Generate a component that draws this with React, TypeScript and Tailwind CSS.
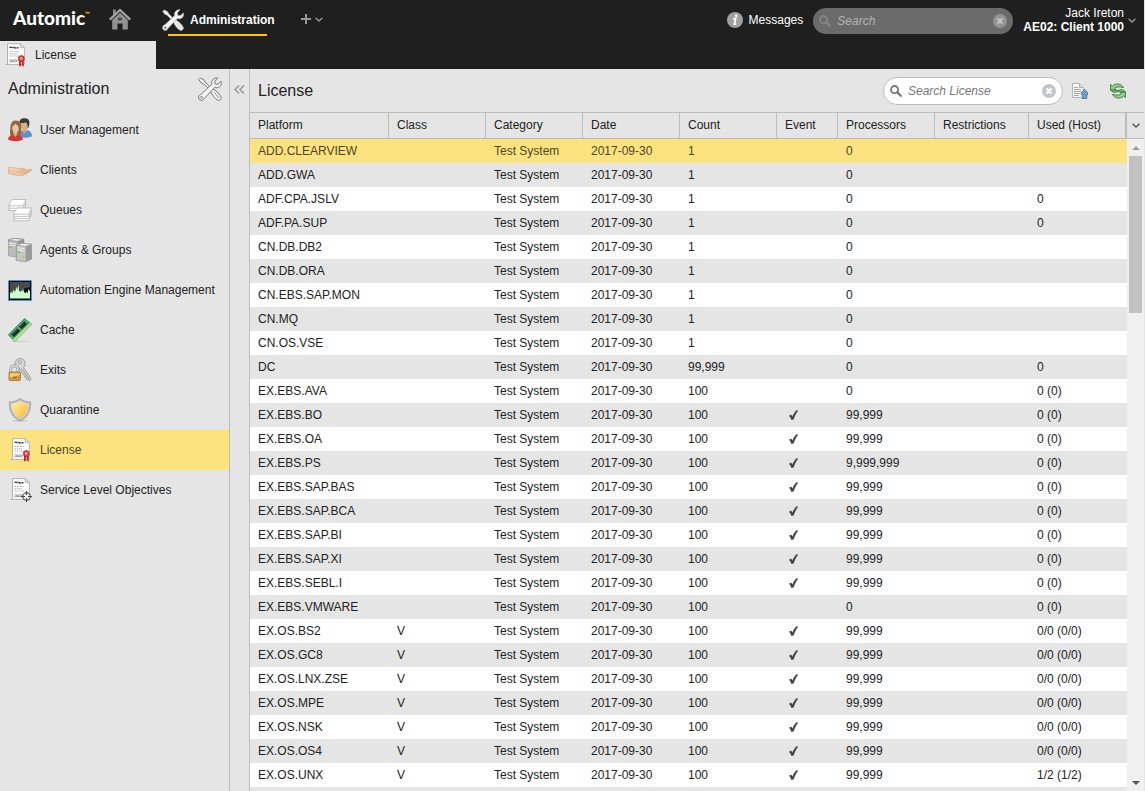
import { useState } from 'react';
import type { ReactNode } from 'react';

type IconProps = { className?: string };

const ToolsIcon = ({ className = '', dark = false }: IconProps & { dark?: boolean }) => {
  const line = dark ? '#6a6a6a' : '#b0b0b0';
  return (
    <svg viewBox="0 0 24 24" className={className} aria-hidden="true">
      <g stroke={line} strokeWidth=".9" strokeLinejoin="round" fill="#f4f4f4">
        <path d="M.8 2.6 2.4 1 6.4 3.2 7 5 12 10 10.4 11.6 5.4 6.6 3.4 6Z" />
        <path d="M12.8 14.4C13.2 13.2 14.4 12.2 15.8 12.4 18.6 14 22 17.6 23.2 20.2 23.6 22.2 21.8 23.8 19.8 23.2 17 21.8 13.8 17.8 12.8 14.4Z" />
        <path d="M19.6.9 16.8 4.2 17.2 7 20 7.3 23.2 4.4C24.1 7.2 22.6 10 19.8 10.6 18.6 10.9 17.6 10.7 16.8 10.4L6.8 20.8C6 22.6 4.6 23.5 3.2 23.3 1.4 23.1.4 21.6.7 19.9.9 18.5 1.9 17.6 3.2 17.2L13.7 7.3C13 3.6 15.8.3 19.6.9Z" />
      </g>
      <circle cx="3.6" cy="20.4" r="1" fill={dark ? '#e5e5e5' : '#1f1f1f'} stroke={line} strokeWidth=".7" />
      <path d="M16.4 15.4 20.8 20.8" stroke={line} strokeWidth=".8" />
    </svg>
  );
};

const HomeIcon = ({ className = '' }: IconProps) => (
  <svg viewBox="0 0 22 22" className={className} aria-hidden="true">
    <path d="M4 1.5H6.8V5L4 7.6Z" fill="#8a8a8a" />
    <path d="M.8 11.6 11 2 21.2 11.6" fill="none" stroke="#a6a6a6" strokeWidth="2.2" />
    <path d="M11 4.8 18.8 12V21.5H13.6V15.4H8.4V21.5H3.2V12Z" fill="#929292" />
    <rect x="9" y="9.6" width="4" height="2.8" fill="#4a4a4a" />
  </svg>
);

const ChevronIcon = ({ className = '' }: IconProps) => (
  <svg viewBox="0 0 8 5" className={className} aria-hidden="true">
    <path d="M.6.7 4 4 7.4.7" fill="none" stroke="currentColor" strokeWidth="1.3" />
  </svg>
);

const MagnifierIcon = ({ className = '' }: IconProps) => (
  <svg viewBox="0 0 12 12" className={className} aria-hidden="true">
    <circle cx="4.6" cy="4.6" r="3.6" fill="none" stroke="currentColor" strokeWidth="1.8" />
    <path d="M7.4 7.4 10.8 10.8" stroke="currentColor" strokeWidth="2.2" strokeLinecap="round" />
  </svg>
);

const ClearIcon = ({ cross, className = '' }: IconProps & { cross: string }) => (
  <svg viewBox="0 0 14 14" className={className} aria-hidden="true">
    <circle cx="7" cy="7" r="7" fill="currentColor" />
    <path d="M4.5 4.5 9.5 9.5M9.5 4.5 4.5 9.5" stroke={cross} strokeWidth="2.2" />
  </svg>
);

const InfoIcon = ({ className = '' }: IconProps) => (
  <svg viewBox="0 0 16 16" className={className} aria-hidden="true">
    <circle cx="8" cy="8" r="8" fill="#a0a0a0" />
    <circle cx="9.2" cy="3.8" r="1.4" fill="#fff" />
    <path d="M6 6.6H8.6L7.4 12H9.2" fill="none" stroke="#fff" strokeWidth="1.8" />
  </svg>
);

const CheckIcon = ({ className = '' }: IconProps) => (
  <svg viewBox="0 0 9 10" className={className} aria-hidden="true">
    <path d="M0 5.8 2 4.6 3.4 6.6C4.6 3.8 6 1.6 7.8 0L9 .8C7.2 3.2 5.8 6.2 4.6 9.4L2.4 9.9C1.8 8.2 1.1 7 0 5.8Z" fill="#444" />
  </svg>
);

const ExportIcon = ({ className = '' }: IconProps) => (
  <svg viewBox="0 0 16 16" className={className} aria-hidden="true">
    <path d="M.5.5H7.5L11.5 4.5V14.5H.5Z" fill="#f7f7f7" stroke="#b3b3b3" />
    <path d="M7.5.5V4.5H11.5" fill="#ddd" stroke="#b3b3b3" />
    <path d="M2 4.5H6M2 6.5H9M2 8.5H9M2 10.5H8M2 12.5H7" stroke="#a8a8a8" />
    <path d="M12.5 6.3 15.8 9.8V11.5H14.8V15.5H10.2V11.5H9.2V9.8Z" fill="#6d9fd3" stroke="#3f70a8" strokeWidth=".8" />
  </svg>
);

const RefreshIcon = ({ className = '' }: IconProps) => (
  <svg viewBox="0 0 16 16" className={className} aria-hidden="true">
    <g fill="#9bd096" stroke="#3a8440" strokeWidth="1" strokeLinejoin="round">
      <path d="M.6 1.4V6.8H6.2L4.6 5.2C6.6 3.8 9.6 3.4 13.6 4.6 11.4.8 6-.6 2.4 3.1Z" />
      <path d="M.6 6.8C1.4 8.8 3.6 9.6 6.6 9.2L8.2 7.4C5.4 8 2.6 8 .6 6.8Z" />
      <path d="M15.4 14.6V9.2H9.8L11.4 10.8C9.4 12.2 6.4 12.6 2.4 11.4 4.6 15.2 10 16.6 13.6 12.9Z" />
      <path d="M15.4 9.2C14.6 7.2 12.4 6.4 9.4 6.8L7.8 8.6C10.6 8 13.4 8 15.4 9.2Z" />
    </g>
  </svg>
);

const DocumentPage = () => (
  <>
    <path d="M2.5 21.5H20" stroke="#b0b0b0" />
    <path d="M4.5.6H17.2L21.4 4.6V21.4H4.5Z" fill="#fdfdfd" stroke="#b4b4b4" strokeWidth="1" />
    <path d="M17.2.6V4.6H21.4Z" fill="#ddd" stroke="#b4b4b4" strokeWidth=".8" />
    <path d="M6.5 4.4H9M9.5 4.8 10.6 4.2M11 4.7H12.4M13 4.4V5.6M14 4.8H15.4" stroke="#333" strokeWidth="1.4" fill="none" />
    <path d="M6.5 8.5H11M12 8.5H16M6.5 10.8H14M6.5 13H10M11 13H16" stroke="#b0b0b0" strokeWidth=".9" strokeDasharray="1.6 .5" />
    <path d="M6.5 17.6 8 16.4 8.6 17.8 10.2 16.6 10.6 17.8 12.4 16.2 13.2 17.6 15 17.4M6.5 18.6H14" stroke="#777" strokeWidth=".7" fill="none" />
  </>
);

const LicenseIcon = () => (
  <svg viewBox="0 0 24 24" className="size-6 shrink-0" aria-hidden="true">
    <DocumentPage />
    <path d="M16 17.5V23.8L17.2 22.6 17.9 23.4V17.5ZM18.7 17.5V23.4L19.6 22.6 20.8 23.8V17.5Z" fill="#c02525" />
    <circle cx="18.3" cy="15.6" r="3" fill="#d94444" stroke="#b02020" strokeWidth=".7" />
    <circle cx="18.3" cy="15.4" r="1.4" fill="#f0a0a0" />
  </svg>
);

const ObjectivesIcon = () => (
  <svg viewBox="0 0 24 24" className="size-6 shrink-0" aria-hidden="true">
    <DocumentPage />
    <circle cx="18.5" cy="18.5" r="3.8" fill="#f2f2f2" stroke="#444" strokeWidth="1.1" />
    <path d="M18.5 13V17M18.5 20V24M13 18.5H17M20 18.5H24" stroke="#444" strokeWidth="1.1" />
  </svg>
);

const UsersIcon = () => (
  <svg viewBox="0 0 24 24" className="size-6 shrink-0" aria-hidden="true">
    <path d="M11 19C11 14.4 13.4 12 17.4 11.8 21.6 12 24 14.6 24 18.2 20.4 20 14.6 20 11 19Z" fill="#5b93c9" />
    <path d="M14.6 10.4H18.6L18.8 13.2 16.4 15.4 14 13Z" fill="#d9a67c" />
    <ellipse cx="16.2" cy="7" rx="4.2" ry="5" fill="#d9b08a" />
    <path d="M11.4 6.4C10.6 1.4 14 0 17 .3 20.8.4 22.2 3.4 21.2 7.2 20.8 9 20 10.2 19.4 10.6 20 7.6 19.4 5.6 18 4.6 15.8 5.4 13 4.4 11.4 6.4Z" fill="#3b3b3b" />
    <path d="M2.4 9.6C2.4 5 4.6 2.3 8 2.5 11.8 2.6 13.4 5.6 13.2 9.6 13.1 12.8 13.8 15.4 12.4 17.6 9.4 19.4 5 19.2 2.4 17.4 1.4 14.8 2.4 12.2 2.4 9.6Z" fill="#94663c" />
    <path d="M0 21.6C.2 18.8 2.6 17.2 5.4 16.6H9.8C12.6 17.2 14.8 19 15 21.6 11 23.8 4 23.8 0 21.6Z" fill="#cf3636" />
    <path d="M5.8 13.2H9.2V16.4L7.4 19 5.4 16.4Z" fill="#dcae86" />
    <path d="M4.2 9.6C4.4 7.8 6.4 7.6 7.6 5.6 8.6 7.6 10.6 7.6 10.8 9.8 10.8 13 9.2 15.2 7.6 15.2 5.8 15.2 4.2 12.8 4.2 9.6Z" fill="#e6c8a8" />
  </svg>
);

const HandIcon = () => (
  <svg viewBox="0 0 24 24" className="size-6 shrink-0" aria-hidden="true">
    <path d="M0 9.4C4 9.2 7 10 9.6 10.4 13 9.8 16 10.2 17.4 11.4 20 11.6 23 11 23.8 11.6 24 12.6 22.4 13.2 21 14 18.6 15.6 15.4 18 11.4 17.8 7 17.6 4 16 0 15.6Z" fill="#ecc5a4" stroke="#cf9c78" strokeWidth=".5" />
    <path d="M9 13.6C12 14.4 15.4 14.2 22.6 12.6M12 12H17.4M13.6 16C16.4 15.6 18.4 15 20.6 13.8" fill="none" stroke="#cf9a74" strokeWidth=".6" />
    <path d="M1 10.6C4 10.4 6 11.2 9 11.6" fill="none" stroke="#f8dcc4" strokeWidth="1" />
  </svg>
);

const QueuesIcon = () => (
  <svg viewBox="0 0 24 24" className="size-6 shrink-0" aria-hidden="true">
    <g fill="#fff" stroke="#b2b2b2" strokeWidth=".8" strokeLinejoin="round">
      <path d="M.5 12.5 3.6 6.4H18L14.8 12.5Z" />
      <path d="M.5 10.2 4 4H18L14.8 10.2Z" />
      <path d="M.5 7.8 4 1.5H18L14.8 7.8Z" />
      <path d="M5.5 22.8 8.6 16.6H23.5L20.5 22.8Z" />
      <path d="M5.5 20.6 8.6 14.4H23.5L20.5 20.6Z" />
      <path d="M5.5 18.4 8.6 12.2H23.5L20.5 18.4Z" />
      <path d="M5.5 16.2 8.6 10H23.5L20.5 16.2Z" />
    </g>
  </svg>
);

const ServersIcon = () => (
  <svg viewBox="0 0 24 24" className="size-6 shrink-0" aria-hidden="true">
    <path d="M.3 2 6 .2 16 1.4V17L8 19 .3 17.6Z" fill="#bcbcbc" stroke="#8a8a8a" strokeWidth=".6" />
    <path d="M.3 2 6 .2 16 1.4 9.6 3.6Z" fill="#e2e2e2" stroke="#777" strokeWidth=".5" />
    <path d="M9.6 3.6 16 1.4V6H9.6Z" fill="#979797" />
    <path d="M1.2 5 8.4 6M1.2 7.2 8 8" stroke="#eee" strokeWidth=".9" />
    <path d="M1.2 9 3.6 9.3" stroke="#4bd34b" strokeWidth="1.3" />
    <path d="M8.3 7 14 5.2 23.7 6.4V21L17.6 23.7 8.3 22.4Z" fill="#c6c6c6" stroke="#7d7d7d" strokeWidth=".6" />
    <path d="M8.3 7 14 5.2 23.7 6.4 17.6 8.4Z" fill="#ececec" stroke="#888" strokeWidth=".5" />
    <path d="M17.6 8.4 23.7 6.4V21L17.6 23.7Z" fill="#9a9a9a" />
    <path d="M9.4 9.6 16.6 10.8M9.4 11.8 16.6 13" stroke="#f2f2f2" strokeWidth="1" />
    <path d="M9.4 14.2 12 14.6" stroke="#4bd34b" strokeWidth="1.3" />
    <circle cx="15.4" cy="19" r=".8" fill="#e0973a" />
  </svg>
);

const MonitorIcon = () => (
  <svg viewBox="0 0 24 24" className="size-6 shrink-0" aria-hidden="true">
    <rect x=".5" y="2.5" width="23" height="20" rx=".5" fill="#0a0a0a" stroke="#4f95cf" />
    <path d="M2 4H22V9L2 15Z" fill="#4a4a4a" />
    <path d="M2 20.5V15L3.4 14 4.4 15 5.4 11.6 6.2 13.6 7.4 13 8.4 8.4 9.2 12 10.4 6.8 11.2 12.4 12.2 14 13.2 11.6 14 13.6 15 10 16 14 17.4 15.2 18.4 13.4 19.6 15.4 20.4 10.6 21.2 13 22 12.4V20.5Z" fill="#cdfccd" />
  </svg>
);

const MemoryIcon = () => (
  <svg viewBox="0 0 24 24" className="size-6 shrink-0" aria-hidden="true">
    <path d="M4 23.4H20" stroke="#cfcfcf" strokeWidth="1.2" />
    <path d="M.2 16.8 16.4.6 23.8 6.2 7 23.4Z" fill="#45ad68" stroke="#2c8a4c" strokeWidth=".7" />
    <path d="M7 23.4 23.8 6.2 22 4.8 5 21.6Z" fill="#9be098" />
    <path d="M6.4 22 22.6 5.8" stroke="#e8dc7a" strokeWidth="1.3" strokeDasharray="1.4 .6" />
    <path d="M3.2 16.4 9.4 10.4 12.2 12.8 6 19Z" fill="#262626" />
    <path d="M11 8.8 16.2 3.6 19 6 13.8 11.2Z" fill="#262626" />
    <path d="M4.6 16.6 9.4 12M12.6 8.8 16.2 5.2" stroke="#666" strokeWidth=".8" />
  </svg>
);

const KeysIcon = () => (
  <svg viewBox="0 0 24 24" className="size-6 shrink-0" aria-hidden="true">
    <path d="M11.8.6C15.4.2 17.6 3.2 17 6.6 16.8 8 16.2 9 15.6 9.6L23.2 20.6 21.4 23 19.6 21.4 18.6 21.6 18.2 19.4 16.8 19.2 16.6 17.2 15 16.6 12 11.2C8.4 10.8 6.6 8.2 6.8 5.4 7.2 2.6 9.4.8 11.8.6Z" fill="#d5d5d5" stroke="#909090" strokeWidth=".8" />
    <circle cx="11.6" cy="4.2" r="1.5" fill="#e5e5e5" stroke="#888" strokeWidth=".7" />
    <path d="M13.6 10.6 21.6 21.6" stroke="#888" strokeWidth=".8" />
    <path d="M2.8 14.8V11.6C2.8 6.6 10 6.6 10 11.6V14.8" fill="none" stroke="#8e8e8e" strokeWidth="2.8" />
    <path d="M2.8 14.8V11.6C2.8 6.6 10 6.6 10 11.6V14.8" fill="none" stroke="#eee" strokeWidth="1.3" />
    <rect x="1" y="14" width="11.4" height="8.6" rx="1" fill="#d99b3f" stroke="#a2691d" strokeWidth=".8" />
    <path d="M1.8 15.2H11.6V17L1.8 19.6Z" fill="#f1cd88" />
    <ellipse cx="6.8" cy="19.6" rx="2.6" ry=".9" fill="#a86f22" />
  </svg>
);

const ShieldIcon = () => (
  <svg viewBox="0 0 24 24" className="size-6 shrink-0" aria-hidden="true">
    <defs>
      <linearGradient id="shieldFill" x1="0" y1="0" x2="1" y2="1">
        <stop offset="0" stopColor="#ffefa8" />
        <stop offset=".5" stopColor="#fbd867" />
        <stop offset="1" stopColor="#fba93f" />
      </linearGradient>
    </defs>
    <ellipse cx="12" cy="22.8" rx="8" ry="1.1" fill="#cdcdcd" />
    <path d="M12 .4C14.8 2.8 18.6 3.8 22.6 3.8 23 12 20.6 19.4 12 23 3.4 19.4 1 12 1.4 3.8 5.4 3.8 9.2 2.8 12 .4Z" fill="#b9b9b9" stroke="#969696" strokeWidth=".6" />
    <path d="M12 2.8C14.6 4.6 17.6 5.6 20.6 5.8 20.6 12.4 18.6 17.6 12 20.8 5.4 17.6 3.4 12.4 3.4 5.8 6.4 5.6 9.4 4.6 12 2.8Z" fill="url(#shieldFill)" stroke="#d9d9d9" strokeWidth=".9" />
  </svg>
);

const menuItems: { label: string; icon: ReactNode }[] = [
  { label: 'User Management', icon: <UsersIcon /> },
  { label: 'Clients', icon: <HandIcon /> },
  { label: 'Queues', icon: <QueuesIcon /> },
  { label: 'Agents & Groups', icon: <ServersIcon /> },
  { label: 'Automation Engine Management', icon: <MonitorIcon /> },
  { label: 'Cache', icon: <MemoryIcon /> },
  { label: 'Exits', icon: <KeysIcon /> },
  { label: 'Quarantine', icon: <ShieldIcon /> },
  { label: 'License', icon: <LicenseIcon /> },
  { label: 'Service Level Objectives', icon: <ObjectivesIcon /> },
];

const columns = [
  { title: 'Platform', width: 'w-[139px]' },
  { title: 'Class', width: 'w-[97px]' },
  { title: 'Category', width: 'w-[97px]' },
  { title: 'Date', width: 'w-[97px]' },
  { title: 'Count', width: 'w-[97px]' },
  { title: 'Event', width: 'w-[61px]' },
  { title: 'Processors', width: 'w-[97px]' },
  { title: 'Restrictions', width: 'w-[94px]' },
  { title: 'Used (Host)', width: '' },
];

// platform, class, count, event, processors, used
type Row = [string, string, string, boolean, string, string];

const rows: Row[] = [
  ['ADD.CLEARVIEW', '', '1', false, '0', ''],
  ['ADD.GWA', '', '1', false, '0', ''],
  ['ADF.CPA.JSLV', '', '1', false, '0', '0'],
  ['ADF.PA.SUP', '', '1', false, '0', '0'],
  ['CN.DB.DB2', '', '1', false, '0', ''],
  ['CN.DB.ORA', '', '1', false, '0', ''],
  ['CN.EBS.SAP.MON', '', '1', false, '0', ''],
  ['CN.MQ', '', '1', false, '0', ''],
  ['CN.OS.VSE', '', '1', false, '0', ''],
  ['DC', '', '99,999', false, '0', '0'],
  ['EX.EBS.AVA', '', '100', false, '0', '0 (0)'],
  ['EX.EBS.BO', '', '100', true, '99,999', '0 (0)'],
  ['EX.EBS.OA', '', '100', true, '99,999', '0 (0)'],
  ['EX.EBS.PS', '', '100', true, '9,999,999', '0 (0)'],
  ['EX.EBS.SAP.BAS', '', '100', true, '99,999', '0 (0)'],
  ['EX.EBS.SAP.BCA', '', '100', true, '99,999', '0 (0)'],
  ['EX.EBS.SAP.BI', '', '100', true, '99,999', '0 (0)'],
  ['EX.EBS.SAP.XI', '', '100', true, '99,999', '0 (0)'],
  ['EX.EBS.SEBL.I', '', '100', true, '99,999', '0 (0)'],
  ['EX.EBS.VMWARE', '', '100', false, '0', '0 (0)'],
  ['EX.OS.BS2', 'V', '100', true, '99,999', '0/0 (0/0)'],
  ['EX.OS.GC8', 'V', '100', true, '99,999', '0/0 (0/0)'],
  ['EX.OS.LNX.ZSE', 'V', '100', true, '99,999', '0/0 (0/0)'],
  ['EX.OS.MPE', 'V', '100', true, '99,999', '0/0 (0/0)'],
  ['EX.OS.NSK', 'V', '100', true, '99,999', '0/0 (0/0)'],
  ['EX.OS.OS4', 'V', '100', true, '99,999', '0/0 (0/0)'],
  ['EX.OS.UNX', 'V', '100', true, '99,999', '1/2 (1/2)'],
];

const TopBar = () => {
  const [query, setQuery] = useState('');

  return (
    <header className="flex h-[41px] shrink-0 bg-[#1f1f1f] text-white">
      <a href="#" className="flex h-9 w-[98px] items-center pl-[13px] font-['Lato',sans-serif] text-[19px] font-black">
        Automic<span className="self-start pt-2 text-[6px] leading-3 text-[#ffc500]">™</span>
      </a>
      <button aria-label="Home" className="mt-2 ml-[11px] size-[22px]">
        <HomeIcon className="size-[22px]" />
      </button>
      <button className="ml-[29px] flex flex-col text-xs font-bold">
        <span className="flex h-[34px] items-center gap-1.5 pt-1.5 pl-0.5">
          <ToolsIcon className="size-[22px]" />
          Administration
        </span>
        <span className="mx-2 h-0.5 self-stretch bg-[#ffc500]" />
      </button>
      <button aria-label="Add" className="ml-[26px] flex h-[38px] items-center gap-1 text-[#999]">
        <svg viewBox="0 0 10 10" className="size-2.5" aria-hidden="true">
          <path d="M5 0V10M0 5H10" stroke="currentColor" strokeWidth="2" />
        </svg>
        <ChevronIcon className="h-[5px] w-2" />
      </button>

      <div className="ml-auto flex h-10 items-center">
        <button className="flex items-center gap-1.5 text-xs">
          <InfoIcon className="size-4" />
          Messages
        </button>
        <div className="ml-2.5 mt-0.5 flex h-[26px] w-[200px] items-center rounded-full bg-[#6b6b6b] px-1.5">
          <MagnifierIcon className="size-3 text-[#868686]" />
          <input
            type="text"
            aria-label="Search"
            placeholder="Search"
            value={query}
            onChange={(e) => setQuery(e.target.value)}
            className="ml-1.5 w-full min-w-0 flex-1 bg-transparent text-xs italic outline-none placeholder:text-[#b4b4b4]"
          />
          <button aria-label="Clear search" onClick={() => setQuery('')}>
            <ClearIcon cross="#c4c4c4" className="size-3.5 text-[#949494]" />
          </button>
        </div>
        <button className="ml-2.5 flex items-center gap-1 pr-2 text-right text-xs leading-[14px]">
          <span>
            Jack Ireton
            <br />
            <b>AE02: Client 1000</b>
          </span>
          <ChevronIcon className="h-[5px] w-2 text-[#999]" />
        </button>
      </div>
    </header>
  );
};

const Sidebar = ({ active, onSelect }: { active: string; onSelect: (label: string) => void }) => (
  <aside className="flex w-[230px] shrink-0 flex-col border-r border-[#bcbcbc]">
    <div className="flex h-10 items-center justify-between pr-[7px] pl-2">
      <h2 className="text-base">Administration</h2>
      <ToolsIcon dark className="size-6" />
    </div>
    <nav className="pt-px">
      {menuItems.map((item) => (
        <button
          key={item.label}
          onClick={() => onSelect(item.label)}
          className={`flex h-10 w-full items-center gap-2 pl-2 text-xs whitespace-nowrap ${
            item.label === active ? 'bg-[#fde37f] text-[#4d4526]' : ''
          }`}
        >
          {item.icon}
          {item.label}
        </button>
      ))}
    </nav>
  </aside>
);

const LicenseTable = () => {
  const [selected, setSelected] = useState(0);

  return (
    <div className="flex min-h-0 flex-1 border-t border-[#bcbcbc]">
      <div className="min-w-0 flex-1 overflow-hidden">
        <table className="w-full table-fixed border-separate border-spacing-0 text-left text-xs">
          <thead>
            <tr>
              {columns.map((col) => (
                <th
                  key={col.title}
                  className={`h-[26px] border-r border-b border-[#bcbcbc] px-2 pb-0.5 font-normal last:border-r-2 ${col.width}`}
                >
                  {col.title}
                </th>
              ))}
            </tr>
          </thead>
          <tbody>
            {rows.map(([platform, cls, count, event, processors, used], i) => (
              <tr
                key={platform}
                onClick={() => setSelected(i)}
                className={`h-6 ${i === selected ? 'bg-[#fde37f] text-[#4d4526]' : i % 2 ? 'bg-[#e5e5e5]' : 'bg-white'}`}
              >
                <td className="px-2">{platform}</td>
                <td className="px-2">{cls}</td>
                <td className="px-2">Test System</td>
                <td className="px-2">2017-09-30</td>
                <td className="px-2">{count}</td>
                <td className="pl-3">{event && <CheckIcon className="h-2.5 w-[9px]" />}</td>
                <td className="px-2">{processors}</td>
                <td className="px-2"></td>
                <td className="px-2">{used}</td>
              </tr>
            ))}
          </tbody>
        </table>
      </div>

      <div className="flex w-[17px] flex-col bg-[#f0f0f0]">
        <button aria-label="Columns" className="flex h-[26px] shrink-0 items-center justify-center border-b border-[#bcbcbc] bg-[#e5e5e5]">
          <ChevronIcon className="h-[5px] w-2 text-[#555]" />
        </button>
        <div className="flex h-[17px] shrink-0 items-center justify-center">
          <svg viewBox="0 0 8 4" className="h-1 w-2" aria-hidden="true">
            <path d="M4 0 8 4H0Z" fill="#a0a0a0" />
          </svg>
        </div>
        <div className="mx-0.5 h-[157px] bg-[#c1c1c1]" />
        <div className="mt-auto flex h-[17px] shrink-0 items-center justify-center">
          <svg viewBox="0 0 8 4" className="h-1 w-2" aria-hidden="true">
            <path d="M0 0H8L4 4Z" fill="#505050" />
          </svg>
        </div>
      </div>
    </div>
  );
};

const App = () => {
  const [active, setActive] = useState('License');
  const [filter, setFilter] = useState('');

  return (
    <div className="flex h-screen flex-col overflow-hidden bg-[#e5e5e5] pr-px font-['Liberation_Sans',Arial,sans-serif] text-[#222]">
      <TopBar />
      <div className="flex h-7 shrink-0 bg-[#1f1f1f]">
        <button className="flex w-[156px] items-center gap-2 bg-[#e5e5e5] pl-[3px] text-xs">
          <LicenseIcon />
          License
        </button>
      </div>

      <div className="flex min-h-0 flex-1">
        <Sidebar active={active} onSelect={setActive} />
        <div className="w-5 shrink-0 border-r border-[#bcbcbc]">
          <button aria-label="Collapse sidebar" className="flex h-10 w-full items-center justify-center text-[#999]">
            <svg viewBox="0 0 11 9" className="h-[9px] w-[11px]" aria-hidden="true">
              <path d="M5 .5 1 4.5 5 8.5M10 .5 6 4.5 10 8.5" fill="none" stroke="currentColor" strokeWidth="1.5" />
            </svg>
          </button>
        </div>

        <main className="flex min-w-0 flex-1 flex-col">
          <div className="flex h-[43px] shrink-0 items-center pr-[18px] pl-2">
            <h1 className="text-base">License</h1>
            <div className="ml-auto flex h-7 w-[180px] items-center rounded-full border border-[#bcbcbc] bg-white px-1.5">
              <MagnifierIcon className="size-3 text-[#777]" />
              <input
                type="text"
                aria-label="Search License"
                placeholder="Search License"
                value={filter}
                onChange={(e) => setFilter(e.target.value)}
                className="ml-1.5 w-full min-w-0 flex-1 bg-transparent text-xs italic outline-none placeholder:text-[#777]"
              />
              <button aria-label="Clear license search" onClick={() => setFilter('')}>
                <ClearIcon cross="#fff" className="size-3.5 text-[#c3c6c9]" />
              </button>
            </div>
            <button aria-label="Export" className="ml-[9px]">
              <ExportIcon className="size-4" />
            </button>
            <button aria-label="Refresh" className="ml-[22px]">
              <RefreshIcon className="size-4" />
            </button>
          </div>
          <LicenseTable />
        </main>
      </div>
    </div>
  );
};

export default App;
